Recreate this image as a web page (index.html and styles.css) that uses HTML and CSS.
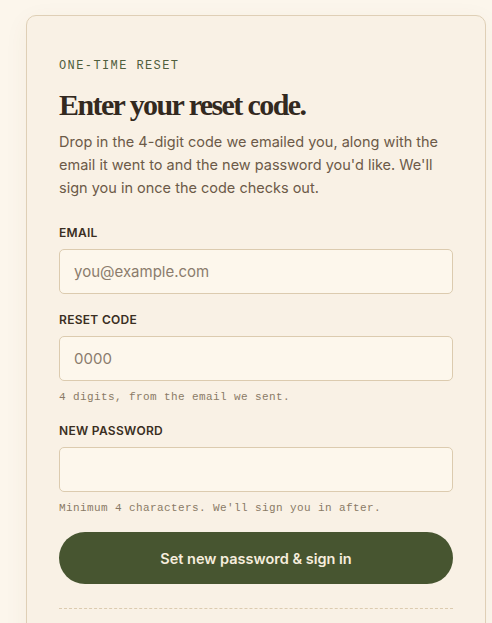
FILE: index.html
```html
<!DOCTYPE html>
<html lang="en">
<head>
<meta charset="utf-8">
<title>Reset code</title>
<link rel="stylesheet" href="styles.css">
</head>
<body>
<main class="card">
  <p class="eyebrow">ONE-TIME RESET</p>
  <h1 class="title">Enter your reset code.</h1>
  <p class="lede">Drop in the 4-digit code we emailed you, along with the email it went to and the new password you'd like. We'll sign you in once the code checks out.</p>
  <form class="form">
    <div class="field">
      <label class="label" for="email">EMAIL</label>
      <input class="input" id="email" type="email" placeholder="you@example.com">
    </div>
    <div class="field">
      <label class="label" for="code">RESET CODE</label>
      <input class="input" id="code" type="text" placeholder="0000">
      <p class="hint">4 digits, from the email we sent.</p>
    </div>
    <div class="field">
      <label class="label" for="pw">NEW PASSWORD</label>
      <input class="input" id="pw" type="password">
      <p class="hint">Minimum 4 characters. We'll sign you in after.</p>
    </div>
    <button class="submit" type="button">Set new password &amp; sign in</button>
  </form>
  <div class="divider"></div>
</main>
</body>
</html>
```

FILE: styles.css
```css
html, body {
  margin: 0;
  padding: 0;
}
body {
  background: #fcf6ec;
  padding: 15px 0 0 26px;
  font-family: Inter, "Noto Sans", sans-serif;
  overflow: hidden;
}
.card {
  box-sizing: border-box;
  width: 460px;
  min-height: 700px;
  background: #f9f1e5;
  border: 1px solid #dfcfb6;
  border-radius: 10px;
  padding: 43px 32px 32px;
  box-shadow: 0 6px 24px rgba(120, 90, 50, 0.06);
}
.eyebrow {
  margin: 0;
  font-family: "Liberation Mono", "DejaVu Sans Mono", monospace;
  font-size: 12px;
  line-height: 14px;
  letter-spacing: 1.4px;
  color: #4f5e3d;
}
.title {
  margin: 14px 0 0;
  font-family: "Liberation Serif", "DejaVu Serif", serif;
  font-weight: 700;
  font-size: 30px;
  line-height: 36px;
  letter-spacing: -1.6px;
  color: #33291f;
}
.lede {
  margin: 7px 0 0;
  font-size: 14.5px;
  line-height: 23px;
  color: #6c5a48;
}
.form {
  margin-top: 26px;
  display: flex;
  flex-direction: column;
  gap: 18px;
}
.field {
  display: flex;
  flex-direction: column;
}
.label {
  font-size: 12px;
  line-height: 16px;
  font-weight: 600;
  letter-spacing: 0.3px;
  color: #3a2e22;
  margin-bottom: 8px;
}
.input {
  box-sizing: border-box;
  height: 45px;
  border: 1px solid #dccbaf;
  border-radius: 5px;
  background: #fdf7ec;
  padding: 0 14px;
  font-family: Inter, "Noto Sans", sans-serif;
  font-size: 15px;
  color: #3a2e22;
  outline: none;
}
.input::placeholder {
  color: #8b7c6c;
}
.hint {
  margin: 9px 0 0;
  font-family: "Liberation Mono", "DejaVu Sans Mono", monospace;
  font-size: 11px;
  line-height: 15px;
  letter-spacing: 0.4px;
  color: #8a7a66;
}
.submit {
  margin-top: -2px;
  height: 52px;
  border: none;
  border-radius: 26px;
  background: #475530;
  color: #f6eddd;
  font-family: Inter, "Noto Sans", sans-serif;
  font-size: 14.5px;
  font-weight: 600;
  cursor: pointer;
}
.divider {
  margin-top: 24px;
  border-top: 1px dashed #dccbaf;
}
```
